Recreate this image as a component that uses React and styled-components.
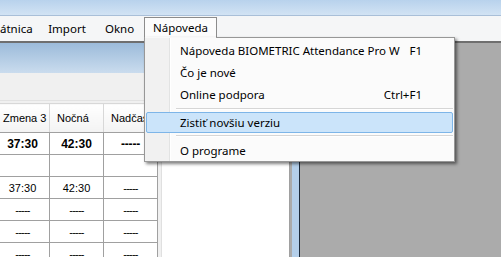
import React from "react";
import styled, { createGlobalStyle, css } from "styled-components";

const Global = createGlobalStyle`
  html, body { margin: 0; padding: 0; background: #ababab; }
  body { width: 501px; height: 257px; overflow: hidden; }
`;

const Screen = styled.div`
  width: 501px;
  height: 257px;
  overflow: hidden;
  display: flex;
  flex-direction: column;
  font-family: "Noto Sans", "Open Sans", sans-serif;
  background: #ababab;
`;

const TitleStrip = styled.div`
  flex: none;
  height: 15px;
  background: linear-gradient(#b8d2ec, #d2e3f4);
  border-bottom: 1px solid #a9bfd8;
`;

const MenuBar = styled.div`
  flex: none;
  height: 25px;
  display: flex;
  background: #f5f6f7;
  border-bottom: 2px solid #6f6f6f;
  position: relative;
  z-index: 5;
`;

const MenuItem = styled.div`
  flex: none;
  width: ${(p) => p.$w}px;
  display: flex;
  align-items: center;
  justify-content: ${(p) => (p.$left ? "flex-start" : "center")};
  font-size: 11.5px;
  color: #000;
  position: relative;
  box-sizing: border-box;
  ${(p) =>
    p.$open &&
    css`
      margin-top: 1px;
      height: 22px;
      padding-bottom: 2px;
      background: #fcfcfc;
      border: 1px solid #8c8c8c;
      border-bottom: none;
    `}
`;

const Dropdown = styled.div`
  position: absolute;
  top: 19px;
  left: -1px;
  width: 311px;
  box-sizing: border-box;
  border: 1px solid #979797;
  padding: 1px 1px 0;
  background: linear-gradient(
    to right,
    #f1f1f1 0 24px,
    #e2e3e3 24px 25px,
    #ffffff 25px 26px,
    #fbfbfb 26px
  );
  box-shadow: 2px 2px 3px rgba(0, 0, 0, 0.5);
  z-index: 10;
  &::before {
    content: "";
    position: absolute;
    top: -1px;
    left: 0;
    width: 71px;
    height: 1px;
    background: #f8f8f8;
  }
`;

const DropItem = styled.div`
  height: 22px;
  box-sizing: border-box;
  display: flex;
  align-items: center;
  justify-content: space-between;
  padding: 0 30px 0 33px;
  font-size: 11.5px;
  color: #000;
  border: 1px solid transparent;
  border-radius: 2px;
  ${(p) =>
    p.$active &&
    css`
      height: 21px;
      background: #cbe4fa;
      border-color: #7db5e8;
    `}
`;

const Separator = styled.div`
  height: ${(p) => p.$h}px;
  margin-left: 30px;
  display: flex;
  flex-direction: column;
  justify-content: center;
  &::before {
    content: "";
    height: 1px;
    background: #d6d6d6;
  }
  &::after {
    content: "";
    height: 1px;
    background: #ffffff;
  }
`;

const Workspace = styled.div`
  flex: 1;
  display: flex;
  min-height: 0;
  background: #ababab;
`;

const ChildWindow = styled.div`
  flex: none;
  width: 300px;
  display: flex;
`;

const ChildMain = styled.div`
  flex: 1;
  display: flex;
  flex-direction: column;
  background: #f0f0f0;
  min-width: 0;
`;

const FrameEdge = styled.div`
  flex: none;
  width: 7px;
  background: #b4cfea;
  border-right: 1px solid #1c2a3a;
  margin-left: 2px;
`;

const Caption = styled.div`
  flex: none;
  height: 30px;
  background: linear-gradient(#9cbbda, #cadcee);
`;

const Toolbar = styled.div`
  flex: none;
  height: 27px;
  background: #f0f0f0;
  border-bottom: 1px solid #e2e2e2;
`;

const Body = styled.div`
  flex: 1;
  display: flex;
  padding-top: 2px;
  min-height: 0;
`;

const GridWrap = styled.div`
  flex: none;
  margin-left: -5px;
  width: 163px;
  background: #ffffff;
`;

const Grid = styled.table`
  border-collapse: collapse;
  table-layout: fixed;
  width: 163px;
  font-family: "Liberation Sans", Arial, sans-serif;
  color: #000;
`;

const HeadCell = styled.th`
  height: 28px;
  padding: 0 0 0 7px;
  text-align: left;
  font-weight: normal;
  font-size: 11px;
  white-space: nowrap;
  overflow: hidden;
  background: linear-gradient(#ffffff, #f3f3f3);
  border: 1px solid #d8d8d8;
  border-bottom-color: #a0a0a0;
`;

const Cell = styled.td`
  height: 21px;
  padding: 0;
  text-align: center;
  white-space: nowrap;
  font-size: ${(p) => (p.$bold ? "12px" : "11px")};
  font-weight: ${(p) => (p.$bold ? "bold" : "normal")};
  letter-spacing: ${(p) => (p.$dash ? (p.$bold ? "-0.2px" : "-0.8px") : "0")};
  border: 1px solid #a0a0a0;
`;

const SideGap = styled.div`
  flex: none;
  width: 3px;
`;

const SidePanel = styled.div`
  flex: 1;
  background: #ffffff;
  border-left: 1px solid #e0e0e0;
  border-right: 1px solid #a0a0a0;
`;

const rows = [
  { bold: true, values: ["37:30", "42:30", "-----"] },
  { values: ["", "", ""] },
  { values: ["37:30", "42:30", "-----"] },
  { values: ["-----", "-----", "-----"] },
  { values: ["-----", "-----", "-----"] },
  { values: ["-----", "-----", "-----"] },
];

export default function App() {
  return (
    <>
      <Global />
      <Screen>
        <TitleStrip />
        <MenuBar>
          <MenuItem $w={39} $left>
            átnica
          </MenuItem>
          <MenuItem $w={56}>Import</MenuItem>
          <MenuItem $w={49}>Okno</MenuItem>
          <MenuItem $w={73} $open>
            Nápoveda
            <Dropdown>
              <DropItem>
                <span>Nápoveda BIOMETRIC Attendance Pro W</span>
                <span>F1</span>
              </DropItem>
              <DropItem>
                <span>Čo je nové</span>
              </DropItem>
              <DropItem>
                <span>Online podpora</span>
                <span>Ctrl+F1</span>
              </DropItem>
              <Separator $h={7} />
              <DropItem $active>
                <span>Zistiť novšiu verziu</span>
              </DropItem>
              <Separator $h={6} />
              <DropItem>
                <span>O programe</span>
              </DropItem>
            </Dropdown>
          </MenuItem>
        </MenuBar>
        <Workspace>
          <ChildWindow>
            <ChildMain>
              <Caption />
              <Toolbar />
              <Body>
                <GridWrap>
                  <Grid>
                    <thead>
                      <tr>
                        <HeadCell>Zmena 3</HeadCell>
                        <HeadCell>Nočná</HeadCell>
                        <HeadCell>Nadčasy</HeadCell>
                      </tr>
                    </thead>
                    <tbody>
                      {rows.map((r, i) => (
                        <tr key={i}>
                          {r.values.map((v, j) => (
                            <Cell key={j} $bold={r.bold} $dash={v.startsWith("-")}>
                              {v}
                            </Cell>
                          ))}
                        </tr>
                      ))}
                    </tbody>
                  </Grid>
                </GridWrap>
                <SideGap />
                <SidePanel />
              </Body>
            </ChildMain>
            <FrameEdge />
          </ChildWindow>
        </Workspace>
      </Screen>
    </>
  );
}
